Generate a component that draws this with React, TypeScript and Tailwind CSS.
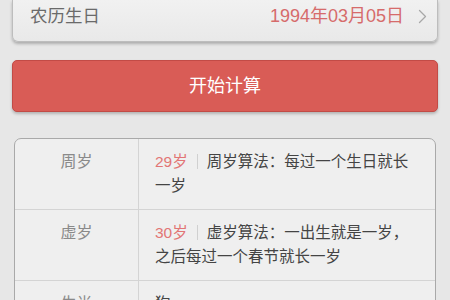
import React from 'react';

const rows = [
  { label: '周岁', age: '29岁', note: '周岁算法：每过一个生日就长一岁' },
  { label: '虚岁', age: '30岁', note: '虚岁算法：一出生就是一岁，之后每过一个春节就长一岁' },
  { label: '生肖', age: '', note: '狗' },
];

const Chevron = () => (
  <svg width="9" height="15" viewBox="0 0 9 15" fill="none" stroke="#a8a8a8" strokeWidth="1.3" strokeLinecap="round" strokeLinejoin="round">
    <path d="M1.5 1.5 L7.5 7.5 L1.5 13.5" />
  </svg>
);

export default function App() {
  return (
    <div
      className="w-[450px] h-[300px] overflow-hidden bg-[#e7e7e7] px-[12px]"
      style={{ fontFamily: '"Liberation Sans", "Noto Sans CJK SC", sans-serif' }}
    >
      <div className="h-[42px] bg-gradient-to-b from-[#f1f1f1] to-[#e9e9e9] border-x border-b border-[#bdbdbd] rounded-b-[6px] shadow-[0_2px_3px_rgba(0,0,0,0.25)] flex items-start">
        <div className="h-[32px] w-full flex items-center pl-[17px] pr-[10px]">
          <span className="text-[17.5px] text-[#6a6a6a]">农历生日</span>
          <span className="ml-auto text-[18px] text-[#d66b6b]">1994年03月05日</span>
          <span className="ml-[14px] flex items-center">
            <Chevron />
          </span>
        </div>
      </div>

      <button className="mt-[18px] w-full h-[52px] rounded-[5px] bg-[#d95c56] border border-[#c24b46] shadow-[0_2px_3px_rgba(0,0,0,0.22)] flex items-center justify-center text-[18px] text-white">
        开始计算
      </button>

      <div className="mt-[26px] mx-[2px] bg-[#efefef] border border-[#a9a9a9] rounded-t-[7px] overflow-hidden">
        {rows.map((r, i) => (
          <div key={r.label} className={`flex ${i > 0 ? 'border-t border-[#d4d4d4]' : ''}`}>
            <div className="w-[124px] shrink-0 border-r border-[#d4d4d4] py-[11px] text-center text-[16px] leading-[24px] text-[#8a8a8a]">
              {r.label}
            </div>
            <div className="w-[280px] pl-[16px] py-[11px] text-[15.5px] leading-[24px] text-[#444]">
              {r.age && (
                <>
                  <span className="text-[#e27575]">{r.age}</span>
                  <span className="inline-block w-px h-[15px] bg-[#d0d0d0] mx-[9px] align-[-2px]" />
                </>
              )}
              {r.note}
            </div>
          </div>
        ))}
      </div>
    </div>
  );
}
